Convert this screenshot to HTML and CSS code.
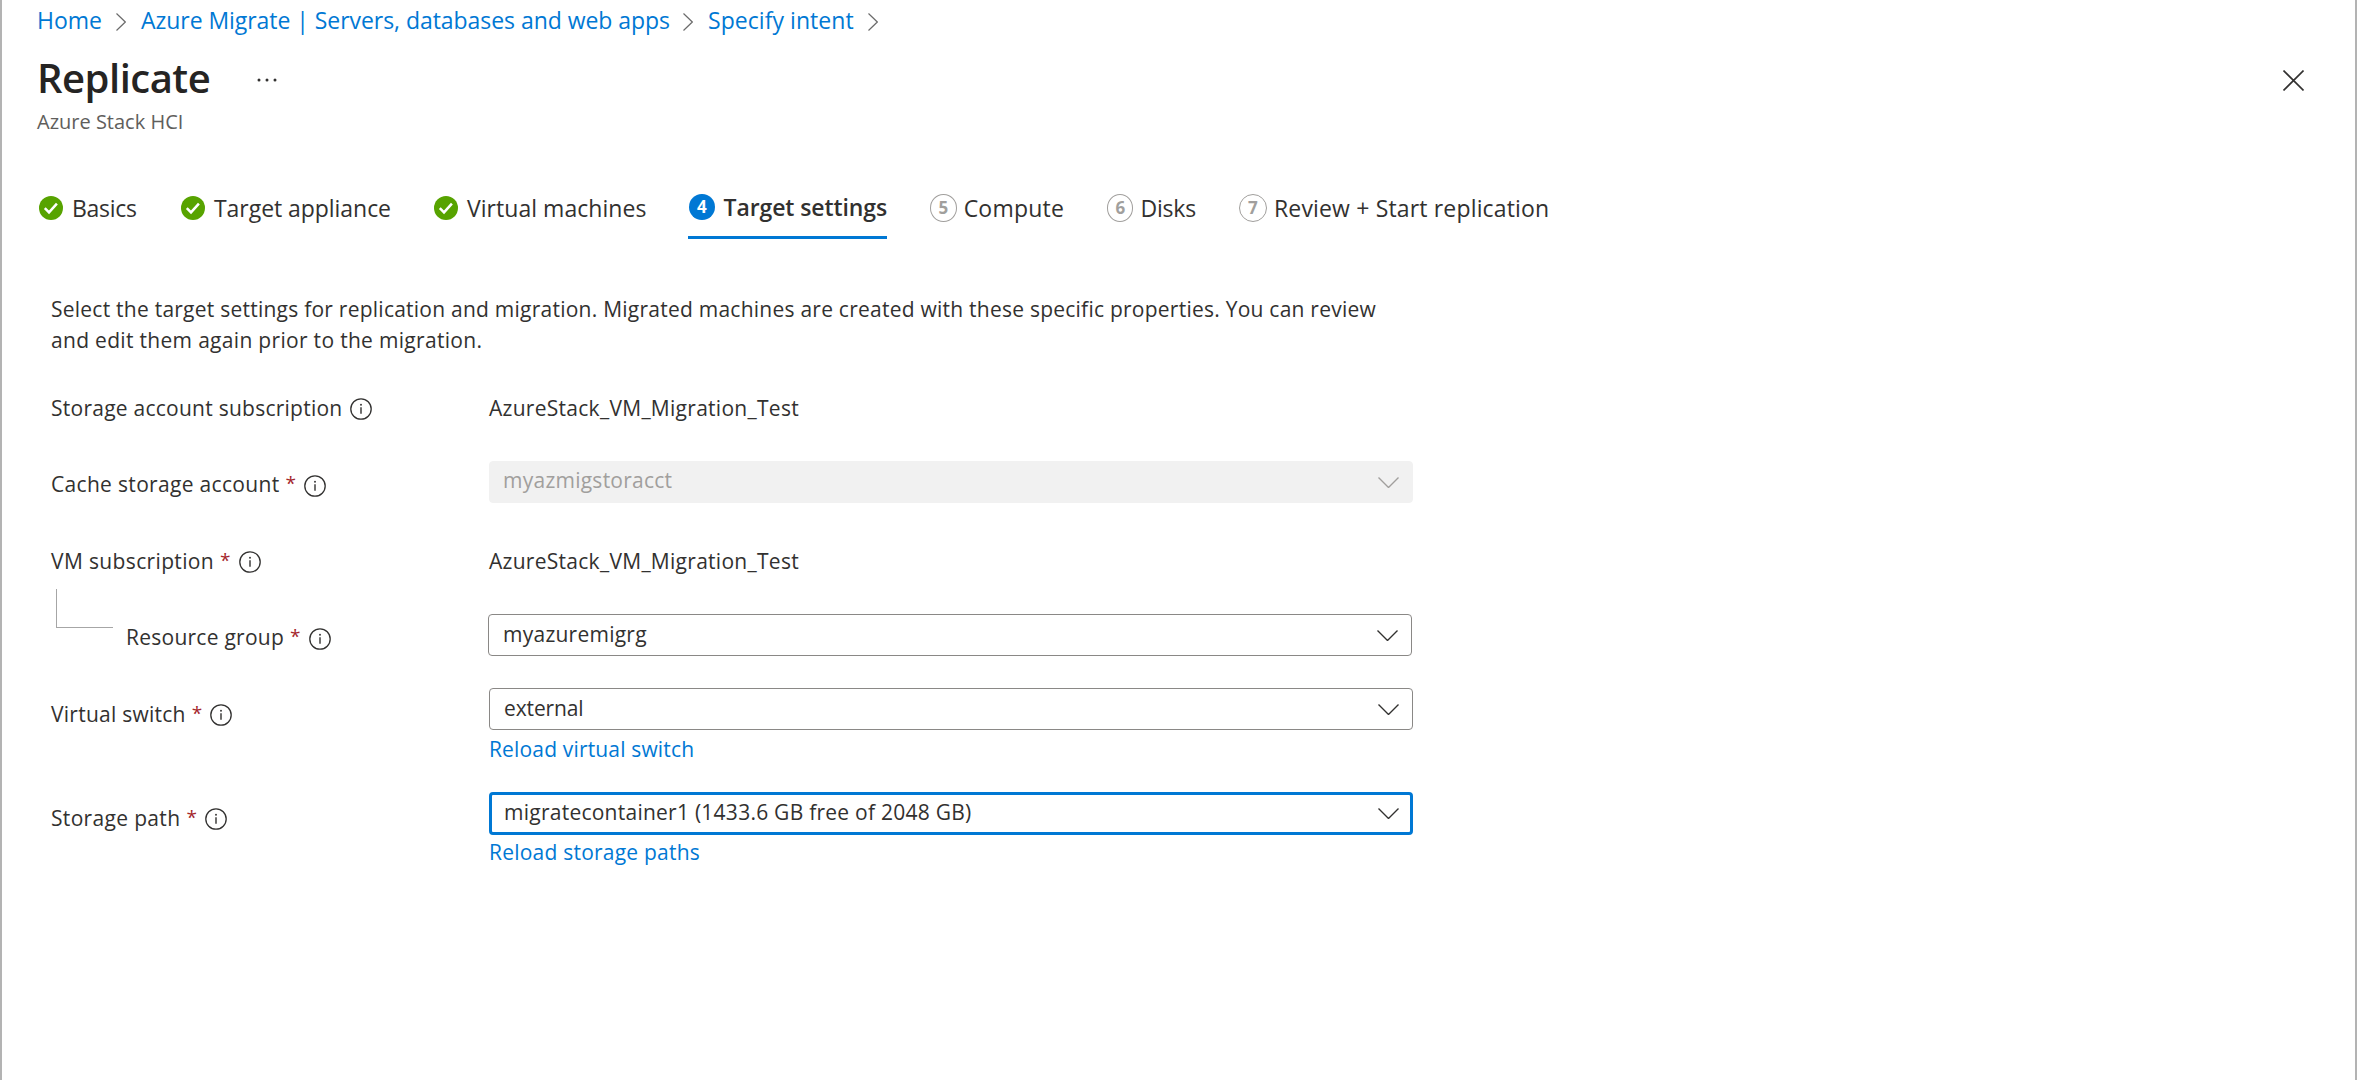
FILE: index.html
```html
<!DOCTYPE html>
<html lang="en">
<head>
<meta charset="utf-8">
<title>Replicate - Azure Stack HCI</title>
<link rel="stylesheet" href="styles.css">
</head>
<body>
<svg class="defs" aria-hidden="true">
  <symbol id="check" viewBox="0 0 24 24"><circle cx="12" cy="12" r="12" fill="#57a300"/><path d="M5.8 12.2l4.2 4.2 7.9-8.8" fill="none" stroke="#fff" stroke-width="2.5"/></symbol>
  <symbol id="sep" viewBox="0 0 10 18"><path d="M.5.5L9.3 9 .5 17.5" fill="none" stroke="#6b6b6b" stroke-width="1.2"/></symbol>
  <symbol id="down" viewBox="0 0 21 11"><path d="M.5.5l10 10 10-10" fill="none" stroke="currentColor" stroke-width="1.4"/></symbol>
  <symbol id="info" viewBox="0 0 22 22"><circle cx="11" cy="11" r="10.2" fill="none" stroke="#323130" stroke-width="1.3"/><path d="M11 9.2v6.6" stroke="#323130" stroke-width="1.4"/><circle cx="11" cy="6.7" r=".95" fill="#323130"/></symbol>
</svg>
<div class="blade">
  <nav class="crumbs">
    <a class="crumb home">Home</a><svg class="sep"><use href="#sep"/></svg>
    <a class="crumb migrate">Azure Migrate | Servers, databases and web apps</a><svg class="sep"><use href="#sep"/></svg>
    <a class="crumb intent">Specify intent</a><svg class="sep"><use href="#sep"/></svg>
  </nav>
  <header class="head">
    <div class="titles">
      <div class="title-row">
        <h1 class="title">Replicate</h1>
        <svg class="more" viewBox="0 0 20 4"><circle cx="2" cy="2" r="1.5"/><circle cx="10" cy="2" r="1.5"/><circle cx="18" cy="2" r="1.5"/></svg>
      </div>
      <p class="subtitle">Azure Stack HCI</p>
    </div>
    <svg class="close" viewBox="0 0 21 21"><path d="M.5.5l20 20M20.5.5l-20 20"/></svg>
  </header>
  <ol class="steps">
    <li class="step basics"><svg class="done"><use href="#check"/></svg>Basics</li>
    <li class="step appliance"><svg class="done"><use href="#check"/></svg>Target appliance</li>
    <li class="step machines"><svg class="done"><use href="#check"/></svg>Virtual machines</li>
    <li class="step active"><span class="num">4</span>Target settings</li>
    <li class="step compute"><span class="num">5</span>Compute</li>
    <li class="step disks"><span class="num">6</span>Disks</li>
    <li class="step review"><span class="num">7</span>Review + Start replication</li>
  </ol>
  <main class="form">
    <p class="intro">Select the target settings for replication and migration. Migrated machines are created with these specific properties. You can review<br><span class="second">and edit them again prior to the migration.</span></p>
    <div class="row account">
      <div class="label">Storage account subscription<svg class="info"><use href="#info"/></svg></div>
      <div class="value">AzureStack_VM_Migration_Test</div>
    </div>
    <div class="row cache">
      <div class="label">Cache storage account<span class="req">*</span><svg class="info"><use href="#info"/></svg></div>
      <div class="field"><div class="select disabled"><span>myazmigstoracct</span><svg class="down"><use href="#down"/></svg></div></div>
    </div>
    <div class="row vm">
      <div class="label">VM subscription<span class="req">*</span><svg class="info"><use href="#info"/></svg></div>
      <div class="value">AzureStack_VM_Migration_Test</div>
    </div>
    <div class="row group">
      <div class="branch"></div>
      <div class="label">Resource group<span class="req">*</span><svg class="info"><use href="#info"/></svg></div>
      <div class="field"><div class="select"><span>myazuremigrg</span><svg class="down"><use href="#down"/></svg></div></div>
    </div>
    <div class="row switch">
      <div class="label">Virtual switch<span class="req">*</span><svg class="info"><use href="#info"/></svg></div>
      <div class="field"><div class="select"><span class="external">external</span><svg class="down"><use href="#down"/></svg></div><a class="reload">Reload virtual switch</a></div>
    </div>
    <div class="row path">
      <div class="label">Storage path<span class="req">*</span><svg class="info"><use href="#info"/></svg></div>
      <div class="field"><div class="select focused"><span>migratecontainer1 (1433.6 GB free of 2048 GB)</span><svg class="down"><use href="#down"/></svg></div><a class="reload">Reload storage paths</a></div>
    </div>
  </main>
</div>
</body>
</html>
```
FILE: styles.css
```css
* { box-sizing: border-box; }
body { margin: 0; background: #fff; color: #323130; font: 21px/30px "Open Sans", "Noto Sans", sans-serif; letter-spacing: .25px; }
h1, p, ol { margin: 0; padding: 0; }
.defs { position: absolute; width: 0; height: 0; }
svg { flex: none; }

.blade { height: 1080px; overflow: hidden; padding-left: 35px; border-left: 2px solid #b3b3b3; border-right: 2px solid #b3b3b3; white-space: nowrap; }

.crumbs { display: flex; height: 42px; font-size: 23px; line-height: 40px; color: #0078d4; letter-spacing: -.05px; }
.crumb { display: block; }
.home { width: 79px; }
.migrate { width: 542px; }
.intent { width: 160px; letter-spacing: .05px; }
.sep { width: 10px; height: 18px; margin-top: 13px; margin-right: 15px; }

.head { display: flex; justify-content: space-between; height: 118px; padding-right: 51px; }
.title-row { display: flex; height: 66px; }
.title { width: 220px; font-size: 40px; line-height: 72px; font-weight: 600; letter-spacing: -.5px; color: #252423; }
.more { width: 20px; height: 4px; margin-top: 36px; fill: #323130; }
.subtitle { font-size: 20px; line-height: 28px; letter-spacing: 0; color: #605e5c; }
.close { width: 21px; height: 21px; margin-top: 28px; fill: none; stroke: #323130; stroke-width: 1.6; }

.steps { display: flex; gap: 43px; height: 80px; padding-left: 1px; list-style: none; font-size: 23px; line-height: 34px; letter-spacing: 0; }
.step { display: flex; height: 80px; padding-top: 31px; }
.done { width: 24px; height: 24px; margin: 5px 9px 0 1px; }
.num { width: 28px; height: 28px; margin: 3px 7px 0 0; border: 1px solid #a19f9d; border-radius: 50%; font-size: 17px; line-height: 26px; font-weight: 700; text-align: center; color: #a19f9d; }
.basics { width: 99px; letter-spacing: -.3px; }
.appliance { width: 210px; letter-spacing: -.05px; }
.machines { width: 212px; letter-spacing: .04px; }
.active { width: 199px; height: 80px; padding-top: 30px; border-bottom: 3px solid #0078d4; font-weight: 600; letter-spacing: -.1px; }
.active .num { width: 26px; height: 26px; margin: 4px 9px 0 1px; border: 0; background: #0078d4; color: #fff; }
.compute { width: 134px; letter-spacing: .2px; }
.disks { width: 89px; letter-spacing: -.2px; }
.review { letter-spacing: .16px; }

.active { border-bottom-width: 3px; height: 79px; }

.form { padding-left: 14px; }
.intro { height: 153px; padding-top: 54px; line-height: 31px; letter-spacing: .24px; }
.second { letter-spacing: .31px; }
.row { display: flex; align-items: flex-start; }
.label { display: flex; flex: none; width: 438px; }
.value { letter-spacing: .28px; }
.req { margin-left: 6px; font-size: 19px; line-height: 28px; color: #a4262c; }
.info { width: 22px; height: 22px; margin: 5px 0 0 8px; }
.account { height: 68px; }
.cache { height: 85px; }
.cache .label, .group .label { padding-top: 8px; }
.cache .label { letter-spacing: .32px; }
.cache .info, .group .info { margin-top: 6px; }
.vm { height: 68px; }
.vm .label { letter-spacing: .36px; }
.group { height: 74px; }
.branch { flex: none; width: 57px; height: 39px; margin: -25px 13px 0 5px; border: solid #a6a6a6; border-width: 0 0 1px 1px; }
.group .label { width: 362px; }
.switch { height: 104px; }
.switch .label, .path .label { padding-top: 11px; }
.path .label { letter-spacing: .33px; }
.field { display: flex; flex-direction: column; }
.select { display: flex; justify-content: space-between; width: 924px; height: 42px; padding: 4px 13px 0 14px; border: 1px solid #8a8886; border-radius: 4px; letter-spacing: .25px; }
.disabled { border-color: #f1f1f1; background: #f1f1f1; color: #a19f9d; padding: 3px 13px 0; }
.disabled .down { margin-top: 12px; }
.focused { height: 43px; padding: 2px 11px 0 12px; border: 3px solid #0078d4; }
.focused .down { margin-top: 11px; }
.external { letter-spacing: -.12px; }
.down { width: 21px; height: 11px; margin-top: 11px; }
.reload { color: #0078d4; line-height: 30px; margin-top: 4px; letter-spacing: .16px; }
.path .reload { margin-top: 2px; letter-spacing: .22px; }
```
